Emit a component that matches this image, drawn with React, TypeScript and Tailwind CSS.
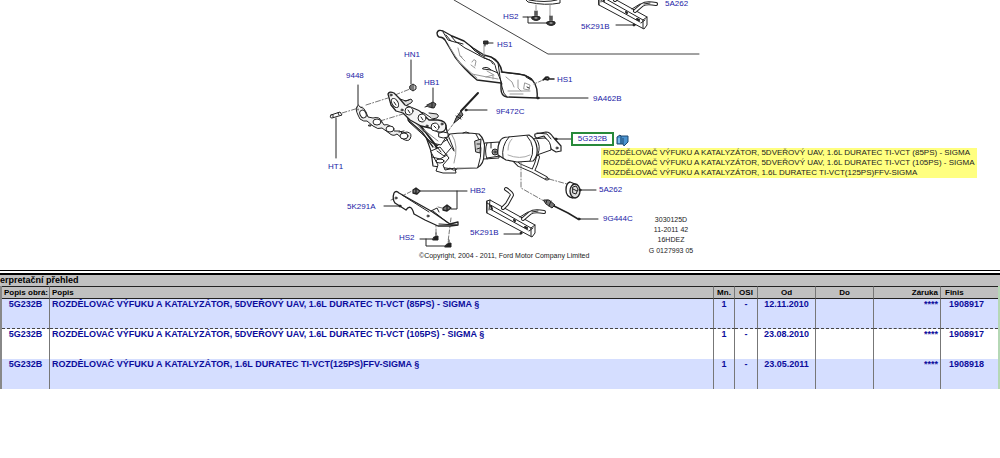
import React from "react";

interface PartRow {
  ref: string;
  desc: string;
  qty: string;
  osi: string;
  from: string;
  to: string;
  warranty: string;
  finis: string;
}

const rows: PartRow[] = [
  { ref: "5G232B", desc: "ROZDĚLOVAČ VÝFUKU A KATALYZÁTOR, 5DVEŘOVÝ UAV, 1.6L DURATEC TI-VCT (85PS) - SIGMA §", qty: "1", osi: "-", from: "12.11.2010", to: "", warranty: "****", finis: "1908917" },
  { ref: "5G232B", desc: "ROZDĚLOVAČ VÝFUKU A KATALYZÁTOR, 5DVEŘOVÝ UAV, 1.6L DURATEC TI-VCT (105PS) - SIGMA §", qty: "1", osi: "-", from: "23.08.2010", to: "", warranty: "****", finis: "1908917" },
  { ref: "5G232B", desc: "ROZDĚLOVAČ VÝFUKU A KATALYZÁTOR, 1.6L DURATEC TI-VCT(125PS)FFV-SIGMA §", qty: "1", osi: "-", from: "23.05.2011", to: "", warranty: "****", finis: "1908918" },
];

const labels = [
  { x: 503, y: 19, text: "HS2" },
  { x: 581, y: 29, text: "5K291B" },
  { x: 665, y: 6, text: "5A262" },
  { x: 497, y: 47, text: "HS1" },
  { x: 557, y: 82, text: "HS1" },
  { x: 593, y: 101, text: "9A462B" },
  { x: 404, y: 57, text: "HN1" },
  { x: 346, y: 78, text: "9448" },
  { x: 424, y: 85, text: "HB1" },
  { x: 496, y: 114, text: "9F472C" },
  { x: 328, y: 169, text: "HT1" },
  { x: 470, y: 193, text: "HB2" },
  { x: 347, y: 209, text: "5K291A" },
  { x: 399, y: 240, text: "HS2" },
  { x: 470, y: 235, text: "5K291B" },
  { x: 599, y: 192, text: "5A262" },
  { x: 603, y: 221, text: "9G444C" },
];

const tips = [
  "ROZDĚLOVAČ VÝFUKU A KATALYZÁTOR, 5DVEŘOVÝ UAV, 1.6L DURATEC TI-VCT (85PS) - SIGMA",
  "ROZDĚLOVAČ VÝFUKU A KATALYZÁTOR, 5DVEŘOVÝ UAV, 1.6L DURATEC TI-VCT (105PS) - SIGMA",
  "ROZDĚLOVAČ VÝFUKU A KATALYZÁTOR, 1.6L DURATEC TI-VCT(125PS)FFV-SIGMA",
];

// small bolt seen from the side, flange head at the bottom
const Bolt = ({ x, y }: { x: number; y: number }) => (
  <g transform={`translate(${x} ${y})`}>
    <path d="M-1-5V1M1-5V1M-1-4H1M-1-2H1" />
    <path d="M-4 1Q0-1 4 1V3Q0 6-4 3Z" fill="#333" />
    <path d="M-1 2H1" stroke="#ddd" />
  </g>
);

// lower bracket with the two bent hanger rods
const Hanger = () => (
  <g>
    <path d="M487 201L490 200L535 225V233L532 237L487 213Z" fill="#fff" />
    <path d="M487 201V213M487 203L531 228V236M490 200L489 210M490 209L528 230M531 228L535 225M529 231L533 228" />
    <path d="M491 206L492 209M514 220L515 221M525 227L527 228" strokeWidth="2" />
    <path d="M503 208L507 204L512 195Q512 193 506 189" stroke="#222" strokeWidth="4" />
    <path d="M503 208L507 204L512 195Q512 193 506 189" stroke="#fff" strokeWidth="2" />
    <path d="M523 219L530 213Q534 210 544 212" stroke="#222" strokeWidth="4" />
    <path d="M523 219L530 213Q534 210 544 212" stroke="#fff" strokeWidth="2" />
    <path d="M520 217L528 212M532 212L538 211" />
  </g>
);

const Diagram = () => (
  <svg className="block" width="1000" height="270" viewBox="0 0 1000 270" role="img" aria-label="5G232B">
    <g fill="none" stroke="#222" strokeWidth="1" strokeLinecap="round" strokeLinejoin="round">
      {/* frame of the upper variant */}
      <path d="M454 0L548 54H699" stroke="#444" />
      <path d="M526 0L528 2Q545 6 560 3V0M529 0Q545 3 557 0" />
      <path d="M536 5V10M550 5V16" stroke="#999" />
      <Bolt x={536} y={16} />
      <Bolt x={551} y={21} />
      <path d="M523 17H528V23H547M528 17H533" />
      <g transform="translate(112 -208)">
        <Hanger />
      </g>
      <path d="M616 25H634" />
      <circle cx="634" cy="25" r="1" fill="#222" />

      {/* heat shield */}
      <path d="M437 33Q438 29 443 31L452 36L464 41L473 48L484 55L491 57Q500 61 502 72L519 74Q531 76 535 84Q538 90 537 98L507 97Q501 96 501 89V83L477 80Q464 69 455 57L445 40Q443 37 439 37Q437 36 437 33Z" fill="#fff" strokeWidth="1.4" />
      <path d="M443 32L448 40L458 43L465 48L471 51L482 57L489 60Q495 61 496 69Q499 76 502 84M451 36L456 42L463 44M446 35L451 41M475 49L479 54L485 57M469 45L475 51L480 54" />
      <path d="M491 57L498 63L500 77L502 87Q503 94 507 97M501 72L525 75L532 79M526 77L531 80M484 58L490 60L493 64" />
      <path d="M483 68Q487 66 491 70L483 69Z M491 70L498 73" />
      <path d="M458 48L460 56L465 61M449 46L459 62L477 78M472 62Q474 58 476 61L475 66M471 65L475 68M460 56L462 57M486 77L493 75L493 79M472 74L487 77L498 79M487 71L494 75M506 77L512 82L514 87M508 91L530 91M510 94H523M518 80V88L521 91M525 83L530 85L529 90L524 89Z" stroke="#999" />
      <path d="M527 87L529 88" />
      <path d="M484 55V45" stroke="#999" />
      <path d="M484 41L488 41L488 44L484 44Z M488 43H493M485 44V46" fill="#333" />
      <path d="M534 84L543 80" strokeDasharray="3 2" stroke="#777" />
      <path d="M543 80L548 77M544 79L548 80L549 78L546 77Z M549 79H554" strokeWidth="1.5" />
      <path d="M537 98H588" />
      <circle cx="538" cy="98" r="1" fill="#222" />

      {/* stud, gasket and nut */}
      <path d="M331 115L340 112L342 115L332 118Q329 118 331 115ZM333 115V117M338 113L339 115" fill="#fff" />
      <path d="M336 118V158M358 85V105M411 60V84M433 88V102" />
      <path d="M342 113L362 107M366 105L388 98M395 95L410 89M380 121L403 114L408 112" stroke="#777" strokeDasharray="5 2 1 2" />
      <path d="M357 107Q355 109 358 115L360 119Q364 122 367 121L373 126Q378 130 382 128L389 133Q393 137 397 134L403 139Q408 142 410 139Q413 133 407 132L402 133L400 131L394 131Q390 123 384 125L382 122Q380 116 373 118L368 117L366 112Q364 107 360 107Q358 103 357 107Z" fill="#eee" />
      <ellipse cx="363" cy="114" rx="3" ry="4" fill="#fff" transform="rotate(-25 363 114)" />
      <ellipse cx="377" cy="122" rx="4" ry="3" fill="#fff" />
      <ellipse cx="390" cy="129" rx="4" ry="3" fill="#fff" />
      <ellipse cx="404" cy="136" rx="4" ry="3" fill="#fff" />
      <path d="M369 125H371V126H369Z M358 109V110M399 132L404 131" />
      <path d="M410 86L413 84L416 86V89L413 91L410 89ZM413 85V90M411 86V89" fill="#ccc" />
      <path d="M427 105L433 102L436 104L434 108L429 107ZM425 107L428 106M432 103L432 108" fill="#666" />

      {/* main catalyst body */}
      <path d="M426 137L446 138L450 134Q465 132 479 134Q485 139 485 151Q484 165 477 168L452 169L433 166L431 151Z" fill="#fff" strokeWidth="1.2" />
      <path d="M476 134Q485 146 478 167M448 135L454 150" />
      <path d="M452 135Q459 145 454 163M457 168H475" stroke="#999" />
      <path d="M475 141L481 139L480 153L476 152ZM477 144H480M477 149L480 148" fill="#ccc" />
      <path d="M463 133L466 132L469 133" />
      <path d="M432 154L438 165L436 171L443 173L456 173L455 168L445 170L443 165L449 158L440 147L431 151Z" fill="#fff" />
      <path d="M437 151L444 156L451 148M435 147L448 139M431 139L441 152M437 135L436 149M445 136L450 145L454 151M432 157L440 159L447 155M450 168Q454 172 457 169" />
      <ellipse cx="440" cy="161" rx="4" ry="2" />

      {/* manifold runners and flange */}
      <path d="M405 111L409 122L420 132L432 143L441 145L448 134L446 127L436 121L424 113Z" fill="#fff" />
      <path d="M408 120L422 132L433 147M415 120L426 133L437 148M421 126L435 144" strokeWidth="1.3" />
      <path d="M424 130L438 141M411 118L424 132" stroke="#888" />
      <path d="M400 99L406 101L411 99Q414 101 411 103L407 105M405 101L409 100M429 113L437 114Q440 116 437 118L432 119" fill="#ddd" />
      <path d="M388 94Q389 91 394 93L399 98L405 105L413 108Q419 110 422 113L429 120L438 120Q446 121 446 126Q446 133 438 132L430 128L421 126L410 120L403 113L396 111L391 105Z" fill="#f4f4f4" strokeWidth="1.3" />
      <ellipse cx="395" cy="103" rx="3" ry="5" fill="#fff" transform="rotate(-30 395 103)" />
      <ellipse cx="409" cy="111" rx="4" ry="4" fill="#fff" />
      <ellipse cx="422" cy="118" rx="4" ry="4" fill="#fff" />
      <ellipse cx="435" cy="127" rx="4" ry="4" fill="#fff" />
      <path d="M394 102L396 105M408 110L410 113M421 117L423 120M434 126L436 128" />
      <circle cx="391" cy="95" r="1" />
      <circle cx="402" cy="110" r="1" />
      <circle cx="427" cy="126" r="1" />
      <circle cx="442" cy="124" r="1" />
      <path d="M439 133Q443 131 448 133V137Q443 139 439 137ZM446 125L447 132" fill="#fff" />

      {/* upper lambda sensor */}
      <path d="M448 131L454 123" stroke="#777" strokeDasharray="3 2" />
      <path d="M461 111L478 93" strokeWidth="2" />
      <path d="M454 123L456 118L461 111L463 115L459 119L454 123ZM456 116L461 119M458 114L462 117" fill="#777" />
      <path d="M466 110H487" />
      <circle cx="466" cy="110" r="1" fill="#222" />

      {/* mid pipe and second catalyst */}
      <path d="M485 143L499 142V158L484 159Z" fill="#fff" />
      <path d="M487 143Q484 151 487 159M491 143V148M487 158L500 156" />
      <circle cx="495" cy="152" r="3" fill="#999" />
      <circle cx="495" cy="152" r="1" fill="#fff" />
      <path d="M514 160L519 165L533 171L546 178M538 157L536 164L533 171" stroke="#222" strokeWidth="4" />
      <path d="M514 160L519 165L533 171L546 178M538 157L536 164L533 171" stroke="#fff" strokeWidth="2" />
      <ellipse cx="547" cy="179" rx="2" ry="1" fill="#fff" />
      <path d="M535 134L546 132Q550 132 553 137L561 146V151L556 152L551 149L549 143L544 136L537 138Q534 137 535 134Z" fill="#fff" strokeWidth="1.2" />
      <path d="M531 139L545 138Q551 141 551 150L537 155L532 157Z" fill="#fff" />
      <path d="M537 133L547 134L551 139M537 140Q541 146 538 154" />
      <circle cx="557" cy="148" r="1" />
      <path d="M500 141Q502 137 508 137L529 135Q536 139 537 148Q538 157 533 161L517 162L506 160L498 155Q497 147 500 141Z" fill="#fff" strokeWidth="1.2" />
      <path d="M509 137Q501 146 503 158M527 136Q537 147 530 161" />
      <path d="M508 155Q520 160 530 155M512 139Q508 143 508 150" stroke="#aaa" />
      <path d="M556 139H571" />
      <circle cx="556" cy="139" r="1" fill="#222" />

      {/* rubber mount and lower sensor */}
      <path d="M549 179L567 184M521 162V188L544 201" stroke="#777" strokeDasharray="5 2 1 2" />
      <path d="M570 182L575 184L578 196L573 198Q566 197 566 190Q566 183 570 182Z" fill="#fff" strokeWidth="1.3" />
      <ellipse cx="575" cy="191" rx="5" ry="7" fill="#ddd" strokeWidth="1.3" />
      <path d="M573 187L576 186L578 189L576 194L573 193ZM573 189L577 191" />
      <path d="M581 190H596M579 219H598" />
      <circle cx="580" cy="190" r="1" fill="#222" />
      <path d="M544 200L549 200L555 205L552 208L546 204ZM547 200L546 203M551 201L549 206" fill="#777" />
      <path d="M554 206L568 213L578 219" strokeWidth="1.5" />
      <circle cx="579" cy="219" r="1" fill="#222" />

      {/* left bracket and its bolts */}
      <path d="M391 200L401 196M402 196L412 191M438 207L446 209M436 217V235M451 218L448 242" stroke="#777" strokeDasharray="4 2" />
      <path d="M394 193Q396 190 399 193L431 211L450 224L458 222V225L450 226H438L425 220L414 214Q411 203 406 210L395 203Q392 199 394 193Z" fill="#fff" strokeWidth="1.3" />
      <path d="M431 211L437 208L439 212M439 224L457 225M402 195L429 212M433 211L448 223" />
      <circle cx="396" cy="198" r="1" />
      <circle cx="428" cy="216" r="1" />
      <path d="M413 190L416 188L420 191L417 194L413 193ZM416 188V194M443 208L447 205L451 208L447 211L443 210ZM447 206V211" fill="#777" strokeWidth="1.3" />
      <path d="M420 191H467M457 191V209H451M384 206H400M420 239H435M426 239V246H446M504 234H521" />
      <circle cx="400" cy="206" r="1" fill="#222" />
      <circle cx="521" cy="233" r="1" fill="#222" />
      <path d="M436 233V238M434 237L438 236V240L433 240ZM449 240V245M447 244L451 243V247L445 247Z" fill="#222" />
      <Hanger />
    </g>
    <g className="fill-[#1a1aa6] font-['Liberation_Sans',sans-serif] text-[8px]">
      {labels.map((l) => (
        <text key={l.text + l.x + l.y} x={l.x} y={l.y}>{l.text}</text>
      ))}
    </g>
    <g className="fill-[#222] font-['Liberation_Sans',sans-serif] text-[7px]">
      <text x="419" y="258">©Copyright, 2004 - 2011, Ford Motor Company Limited</text>
      <g textAnchor="middle">
        <text x="671" y="222">3030125D</text>
        <text x="671" y="232">11-2011 42</text>
        <text x="671" y="242">16HDEZ</text>
        <text x="671" y="253">G 0127993 05</text>
      </g>
    </g>
  </svg>
);

const cell = "border-r border-[#777] px-[2px] overflow-hidden whitespace-nowrap";

const App = () => {
  return (
    <div className="min-h-screen bg-white font-['Liberation_Sans',sans-serif] text-black">
      <section className="relative overflow-hidden border-b border-black">
        <Diagram />
        <button
          type="button"
          className="absolute left-[571px] top-[132px] h-[14px] w-[43px] border-2 border-[#27893a] bg-white text-[8px] leading-[10px] text-[#1a1aa6]"
        >
          5G232B
        </button>
        <svg className="absolute left-[616px] top-[134px]" width="13" height="13" viewBox="0 0 13 13">
          <path d="M1 3L4 1L5 2H12V8L8 12L7 10H1Z" fill="#4a93d0" stroke="#1d4870" />
          <path d="M5 2V10M7 10V4" fill="none" stroke="#1d4870" />
          <path d="M2 4H4V9H2Z" fill="#79b9e8" />
        </svg>
        <div className="absolute left-[601px] top-[148px] bg-[#ffff80] px-[2px] text-[8px] leading-[10px] text-[#222]">
          {tips.map((t) => (
            <p key={t} className="whitespace-nowrap">{t}</p>
          ))}
        </div>
      </section>

      <section className="mt-[2px] border-t-2 border-black">
        <h2 className="h-[11px] bg-[#c0c0c0] text-[9px] font-bold leading-[11px]">erpretační přehled</h2>
        <div className="border-l-2 border-l-[#888] border-r-2 border-r-[#b5d8b5]">
          <table className="w-full table-fixed border-separate border-spacing-0 text-[9px] font-bold">
            <colgroup>
              <col className="w-[48px]" />
              <col />
              <col className="w-[22px]" />
              <col className="w-[23px]" />
              <col className="w-[58px]" />
              <col className="w-[58px]" />
              <col className="w-[67px]" />
              <col className="w-[57px]" />
            </colgroup>
            <thead>
              <tr className="h-[13px] bg-[#c0c0c0] text-[8px] leading-[10px] [&>th]:border-y [&>th]:border-y-[#222] [&>th]:py-0 [&>th]:align-middle">
                <th className={`${cell} text-left`}>Popis obrá:</th>
                <th className="px-[2px] text-left">Popis</th>
                <th className={`${cell} border-l text-center`}>Mn.</th>
                <th className={`${cell} text-center`}>OSI</th>
                <th className={`${cell} text-center`}>Od</th>
                <th className={`${cell} text-center`}>Do</th>
                <th className={`${cell} text-right`}>Záruka</th>
                <th className="px-[4px] text-left">Finis</th>
              </tr>
            </thead>
            <tbody>
              {rows.map((r, i) => (
                <tr
                  key={i}
                  className={`h-[30px] leading-[10px] text-[#0c0c9c] [&>td]:align-top ${i % 2 === 0 ? "bg-[#d5deff]" : "bg-white"} ${i === 0 ? "[&>td]:border-b [&>td]:border-b-[#444] [&>td]:[border-bottom-style:dashed]" : ""}`}
                >
                  <td className={`${cell} text-center`}>{r.ref}</td>
                  <td className="overflow-hidden whitespace-nowrap px-[2px]">{r.desc}</td>
                  <td className={`${cell} border-l text-center`}>{r.qty}</td>
                  <td className={`${cell} text-center`}>{r.osi}</td>
                  <td className={`${cell} text-center`}>{r.from}</td>
                  <td className={cell}>{r.to}</td>
                  <td className={`${cell} text-right`}>{r.warranty}</td>
                  <td className="px-[8px]">{r.finis}</td>
                </tr>
              ))}
            </tbody>
          </table>
        </div>
      </section>
    </div>
  );
};

export default App;
